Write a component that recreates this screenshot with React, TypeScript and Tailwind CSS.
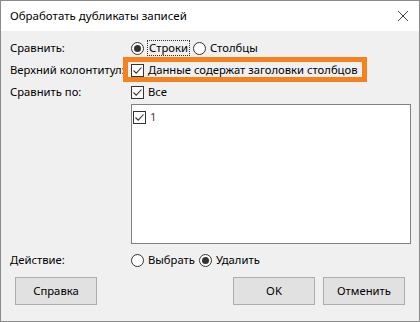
import React from "react";

function Check({ className = "" }: { className?: string }) {
	return (
		<span className={`flex h-[13px] w-[13px] shrink-0 items-center justify-center border border-[#333333] bg-white ${className}`}>
			<svg width="11" height="11" viewBox="0 0 11 11">
				<path d="M1.5 5.5 L4.2 8.2 L9.5 2.5" fill="none" stroke="#333333" strokeWidth="1.1" />
			</svg>
		</span>
	);
}

function Radio({ checked }: { checked?: boolean }) {
	return (
		<span className="flex h-[13px] w-[13px] shrink-0 items-center justify-center rounded-full border border-[#333333] bg-white">
			{checked && <span className="h-[7px] w-[7px] rounded-full bg-[#333333]" />}
		</span>
	);
}

function Button({ label, className = "" }: { label: string; className?: string }) {
	return (
		<button className={`flex h-[28px] w-[82px] items-center justify-center border border-[#adadad] bg-[#e1e1e1] text-black ${className}`}>
			{label}
		</button>
	);
}

export default function App() {
	return (
		<div
			className="flex h-[322px] w-[420px] flex-col whitespace-nowrap border border-[#8a8a8a] bg-[#f0f0f0] text-[11.25px] text-black"
			style={{ fontFamily: '"Noto Sans", "Open Sans", sans-serif' }}
		>
			<div className="flex h-[30px] shrink-0 items-center justify-between bg-white pl-[9px] pr-[9px]">
				<span className="text-[11.5px]">Обработать дубликаты записей</span>
				<svg width="12" height="12" viewBox="0 0 12 12" className="mr-[1px]">
					<path d="M1 1 L11 11 M11 1 L1 11" stroke="#333333" strokeWidth="0.9" />
				</svg>
			</div>

			<div className="relative flex flex-col pl-[9px] pt-[6px]">
				<div className="flex h-[22px] items-center">
					<span className="w-[121px]">Сравнить:</span>
					<Radio checked />
					<span className="ml-[3px] border border-dotted border-[#333333] px-[1px] leading-[14px]">Строки</span>
					<span className="ml-[3px]">
						<Radio />
					</span>
					<span className="ml-[4px]">Столбцы</span>
				</div>
				<div className="flex h-[22px] items-center">
					<span className="w-[121px]">Верхний колонтитул:</span>
					<Check />
					<span className="ml-[4px]">Данные содержат заголовки столбцов</span>
				</div>
				<div className="flex h-[22px] items-center">
					<span className="w-[121px]">Сравнить по:</span>
					<Check />
					<span className="ml-[4px]">Все</span>
				</div>
				<div className="ml-[121px] mt-[1px] h-[140px] w-[280px] border border-[#828282] bg-white pl-[1px] pt-[4px]">
					<div className="flex items-center">
						<Check />
						<span className="ml-[4px] text-[#444444]">1</span>
					</div>
				</div>
				<div className="mt-[5px] flex h-[22px] items-center">
					<span className="w-[121px]">Действие:</span>
					<Radio />
					<span className="ml-[4px]">Выбрать</span>
					<span className="ml-[4px]">
						<Radio checked />
					</span>
					<span className="ml-[4px]">Удалить</span>
				</div>
				<div className="mt-[6px] flex items-center pr-[14px]">
					<Button label="Справка" className="ml-[5px]" />
					<Button label="OK" className="ml-auto" />
					<Button label="Отменить" className="ml-[8px]" />
				</div>

				<div className="absolute left-[122px] top-[26px] h-[25px] w-[244px] border-[5px] border-[#f5821f]" />
			</div>
		</div>
	);
}
